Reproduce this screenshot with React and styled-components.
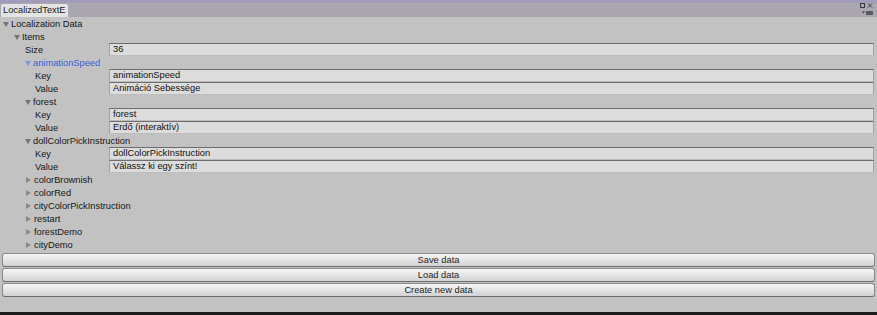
import React from 'react';
import styled, { createGlobalStyle } from 'styled-components';

const GlobalStyle = createGlobalStyle`
  html, body {
    margin: 0;
    padding: 0;
    background: #c2c2c2;
    overflow: hidden;
  }
`;

const Window = styled.div`
  width: 877px;
  height: 315px;
  display: flex;
  flex-direction: column;
  background: #c2c2c2;
  font-family: "Liberation Sans", Arial, sans-serif;
  font-size: 9.3px;
  color: #161616;
`;

const TabBar = styled.div`
  height: 17px;
  flex: none;
  display: flex;
  align-items: flex-end;
  justify-content: space-between;
  box-sizing: border-box;
  border-top: 3px solid #a39bbb;
  background: #aaa7b1;
`;

const Tab = styled.div`
  width: 67px;
  height: 13px;
  margin-left: 1px;
  box-sizing: border-box;
  padding: 1px 0 0 2px;
  background: #e3e3e3;
  border-radius: 2px 2px 0 0;
  white-space: nowrap;
  color: #1a1a1a;
`;

const TabIcons = styled.div`
  display: flex;
  flex-direction: column;
  align-items: flex-end;
  gap: 2px;
  padding: 0 4px 1px 0;
  align-self: flex-start;
`;

const Content = styled.div`
  display: flex;
  flex-direction: column;
`;

const Row = styled.div`
  height: 13px;
  display: flex;
  align-items: center;
`;

const Label = styled.div`
  width: 109px;
  flex: none;
  box-sizing: border-box;
  padding-left: ${(p) => p.indent}px;
  display: flex;
  align-items: center;
  white-space: nowrap;
  color: #161616;
`;

const FoldLabel = styled.div`
  display: flex;
  align-items: center;
  white-space: nowrap;
  padding-left: ${(p) => p.indent}px;
  color: ${(p) => (p.active ? '#3b5fd9' : '#161616')};
`;

const Arrow = styled.span`
  width: 0;
  height: 0;
  margin-right: ${(p) => (p.open ? 2 : 3)}px;
  ${(p) =>
    p.open
      ? `border-left: 3.5px solid transparent;
         border-right: 3.5px solid transparent;
         border-top: 5px solid ${p.active ? '#7c97e4' : '#747474'};
         margin-top: 1px;`
      : `border-top: 3.5px solid transparent;
         border-bottom: 3.5px solid transparent;
         border-left: 5px solid ${p.active ? '#7c97e4' : '#8a8a8a'};
         margin-left: 1px;`}
`;

const Field = styled.div`
  flex: 1;
  height: 13px;
  margin-right: 3px;
  box-sizing: border-box;
  padding: 0 0 0 3px;
  line-height: 11px;
  background: #dcdcdc;
  border: 1px solid #a3a3a3;
  border-top-color: #6d6d6d;
  border-bottom-color: #bdbdbd;
  white-space: nowrap;
  overflow: hidden;
  color: #111;
`;

const Buttons = styled.div`
  display: flex;
  flex-direction: column;
  gap: 1px;
  padding: 2px 2px 0 2px;
`;

const Button = styled.div`
  height: 14px;
  box-sizing: border-box;
  border: 1px solid #8a8a8a;
  border-bottom-color: #6c6c6c;
  border-radius: 3px;
  background: linear-gradient(#f6f6f6, #e4e4e4 50%, #d2d2d2);
  display: flex;
  align-items: center;
  justify-content: center;
  color: #1e1e1e;
`;

const Spacer = styled.div`
  flex: 1;
`;

const BottomLine = styled.div`
  height: 3px;
  flex: none;
  background: #1c1c1c;
`;

const Foldout = ({ indent, open, active, children }) => (
  <Row>
    <FoldLabel indent={indent} active={active}>
      <Arrow open={open} active={active} />
      {children}
    </FoldLabel>
  </Row>
);

const FieldRow = ({ indent, label, value }) => (
  <Row>
    <Label indent={indent}>{label}</Label>
    <Field>{value}</Field>
  </Row>
);

const items = [
  { name: 'animationSpeed', open: true, active: true, value: 'Animáció Sebessége' },
  { name: 'forest', open: true, value: 'Erdő (interaktív)' },
  { name: 'dollColorPickInstruction', open: true, value: 'Válassz ki egy színt!' },
  { name: 'colorBrownish' },
  { name: 'colorRed' },
  { name: 'cityColorPickInstruction' },
  { name: 'restart' },
  { name: 'forestDemo' },
  { name: 'cityDemo' },
];

const WindowIcons = () => (
  <TabIcons>
    <svg width="13" height="6" viewBox="0 0 13 6">
      <rect x="0.5" y="0.5" width="4" height="4" fill="none" stroke="#3a3a3a" />
      <path d="M8 0.5 L12 4.5 M12 0.5 L8 4.5" stroke="#3a3a3a" strokeWidth="1" />
    </svg>
    <svg width="11" height="4" viewBox="0 0 11 4">
      <path d="M0 0.5 H3 L1.5 2.5 Z" fill="#3a3a3a" />
      <rect x="4" y="0" width="7" height="4" fill="#5a5a5a" />
    </svg>
  </TabIcons>
);

export default function App() {
  return (
    <>
      <GlobalStyle />
      <Window>
        <TabBar>
          <Tab>LocalizedTextE</Tab>
          <WindowIcons />
        </TabBar>
        <Content>
          <Foldout indent={3} open>Localization Data</Foldout>
          <Foldout indent={14} open>Items</Foldout>
          <FieldRow indent={25} label="Size" value="36" />
          {items.map((item) => (
            <React.Fragment key={item.name}>
              <Foldout indent={25} open={item.open} active={item.active}>
                {item.name}
              </Foldout>
              {item.open && (
                <>
                  <FieldRow indent={35} label="Key" value={item.name} />
                  <FieldRow indent={35} label="Value" value={item.value} />
                </>
              )}
            </React.Fragment>
          ))}
        </Content>
        <Buttons>
          <Button>Save data</Button>
          <Button>Load data</Button>
          <Button>Create new data</Button>
        </Buttons>
        <Spacer />
        <BottomLine />
      </Window>
    </>
  );
}
